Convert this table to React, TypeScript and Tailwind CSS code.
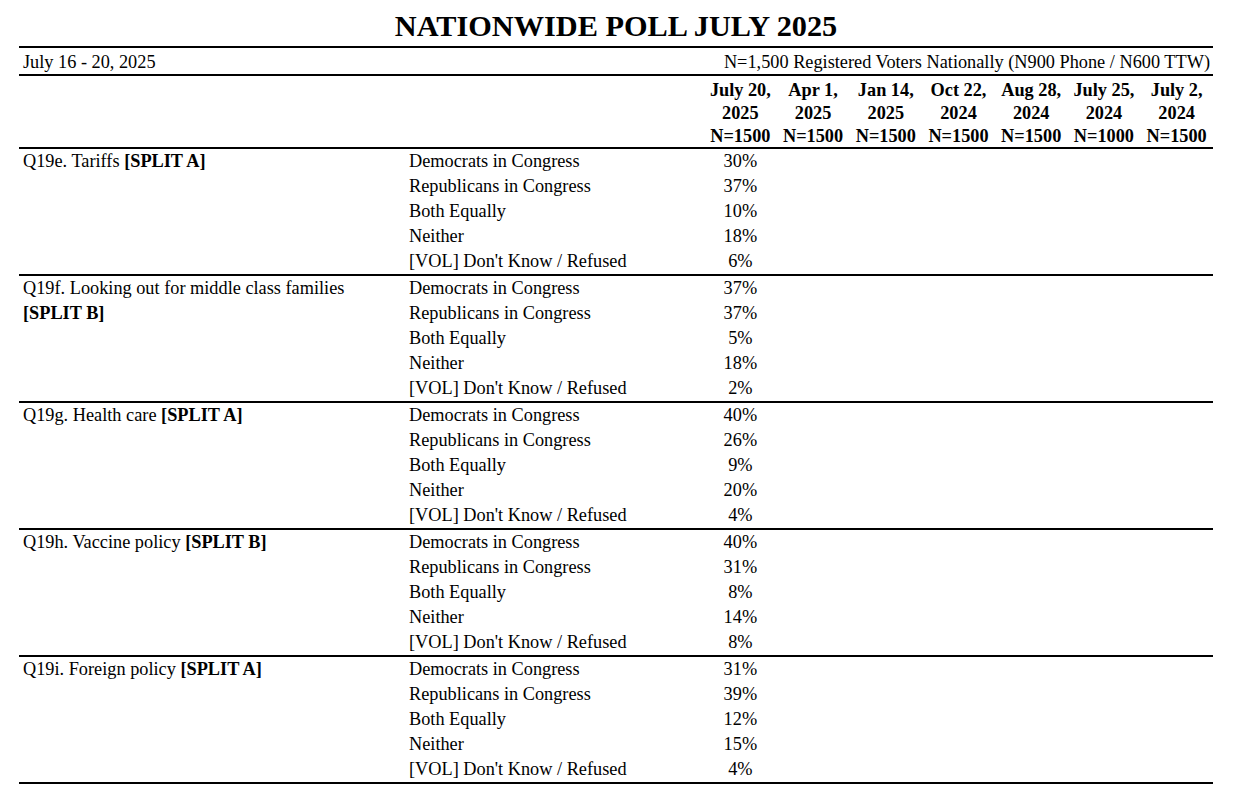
const columns = [
  { date: "July 20,", year: "2025", n: "N=1500" },
  { date: "Apr 1,", year: "2025", n: "N=1500" },
  { date: "Jan 14,", year: "2025", n: "N=1500" },
  { date: "Oct 22,", year: "2024", n: "N=1500" },
  { date: "Aug 28,", year: "2024", n: "N=1500" },
  { date: "July 25,", year: "2024", n: "N=1000" },
  { date: "July 2,", year: "2024", n: "N=1500" },
];

const answers = [
  "Democrats in Congress",
  "Republicans in Congress",
  "Both Equally",
  "Neither",
  "[VOL] Don't Know / Refused",
];

const questions = [
  { label: "Q19e. Tariffs", split: "[SPLIT A]", wrap: false, values: ["30%", "37%", "10%", "18%", "6%"] },
  { label: "Q19f. Looking out for middle class families", split: "[SPLIT B]", wrap: true, values: ["37%", "37%", "5%", "18%", "2%"] },
  { label: "Q19g. Health care", split: "[SPLIT A]", wrap: false, values: ["40%", "26%", "9%", "20%", "4%"] },
  { label: "Q19h. Vaccine policy", split: "[SPLIT B]", wrap: false, values: ["40%", "31%", "8%", "14%", "8%"] },
  { label: "Q19i. Foreign policy", split: "[SPLIT A]", wrap: false, values: ["31%", "39%", "12%", "15%", "4%"] },
];

export default function App() {
  return (
    <div className="min-h-screen w-[1240px] bg-white text-black font-['Liberation_Serif',serif]">
      <div className="ml-[19px] w-[1194px]">
        <div className="flex h-[48px] items-end justify-center border-b-2 border-black pb-[3px]">
          <h1 className="text-[30.3px] font-bold leading-[34px] tracking-normal">NATIONWIDE POLL JULY 2025</h1>
        </div>

        <div className="flex h-[28px] items-center justify-between border-b-2 border-black pl-[4px] pr-[3px] pt-[1px] text-[18.3px] leading-[24px]">
          <span>July 16 - 20, 2025</span>
          <span>N=1,500 Registered Voters Nationally (N900 Phone / N600 TTW)</span>
        </div>

        <div className="grid h-[73px] grid-cols-[390px_295px_repeat(7,1fr)] items-start border-b-2 border-black pt-[3px]">
          <div />
          <div />
          {columns.map((c, i) => (
            <div key={i} className="flex flex-col items-center text-[18.3px] font-bold leading-[23px] whitespace-nowrap">
              <span>{c.date}</span>
              <span>{c.year}</span>
              <span>{c.n}</span>
            </div>
          ))}
        </div>

        {questions.map((q, qi) => (
          <div key={qi} className="grid grid-cols-[390px_295px_repeat(7,1fr)] border-b-2 border-black text-[18.3px]">
            <div className="pl-[4px] leading-[25px]">
              {q.label}
              {q.wrap ? <br /> : " "}
              <span className="font-bold">{q.split}</span>
            </div>
            <div className="flex flex-col">
              {answers.map((a) => (
                <div key={a} className="h-[25px] leading-[25px]">{a}</div>
              ))}
            </div>
            <div className="flex flex-col items-center">
              {q.values.map((v, vi) => (
                <div key={vi} className="h-[25px] leading-[25px]">{v}</div>
              ))}
            </div>
            <div />
            <div />
            <div />
            <div />
            <div />
            <div />
          </div>
        ))}
      </div>
    </div>
  );
}
